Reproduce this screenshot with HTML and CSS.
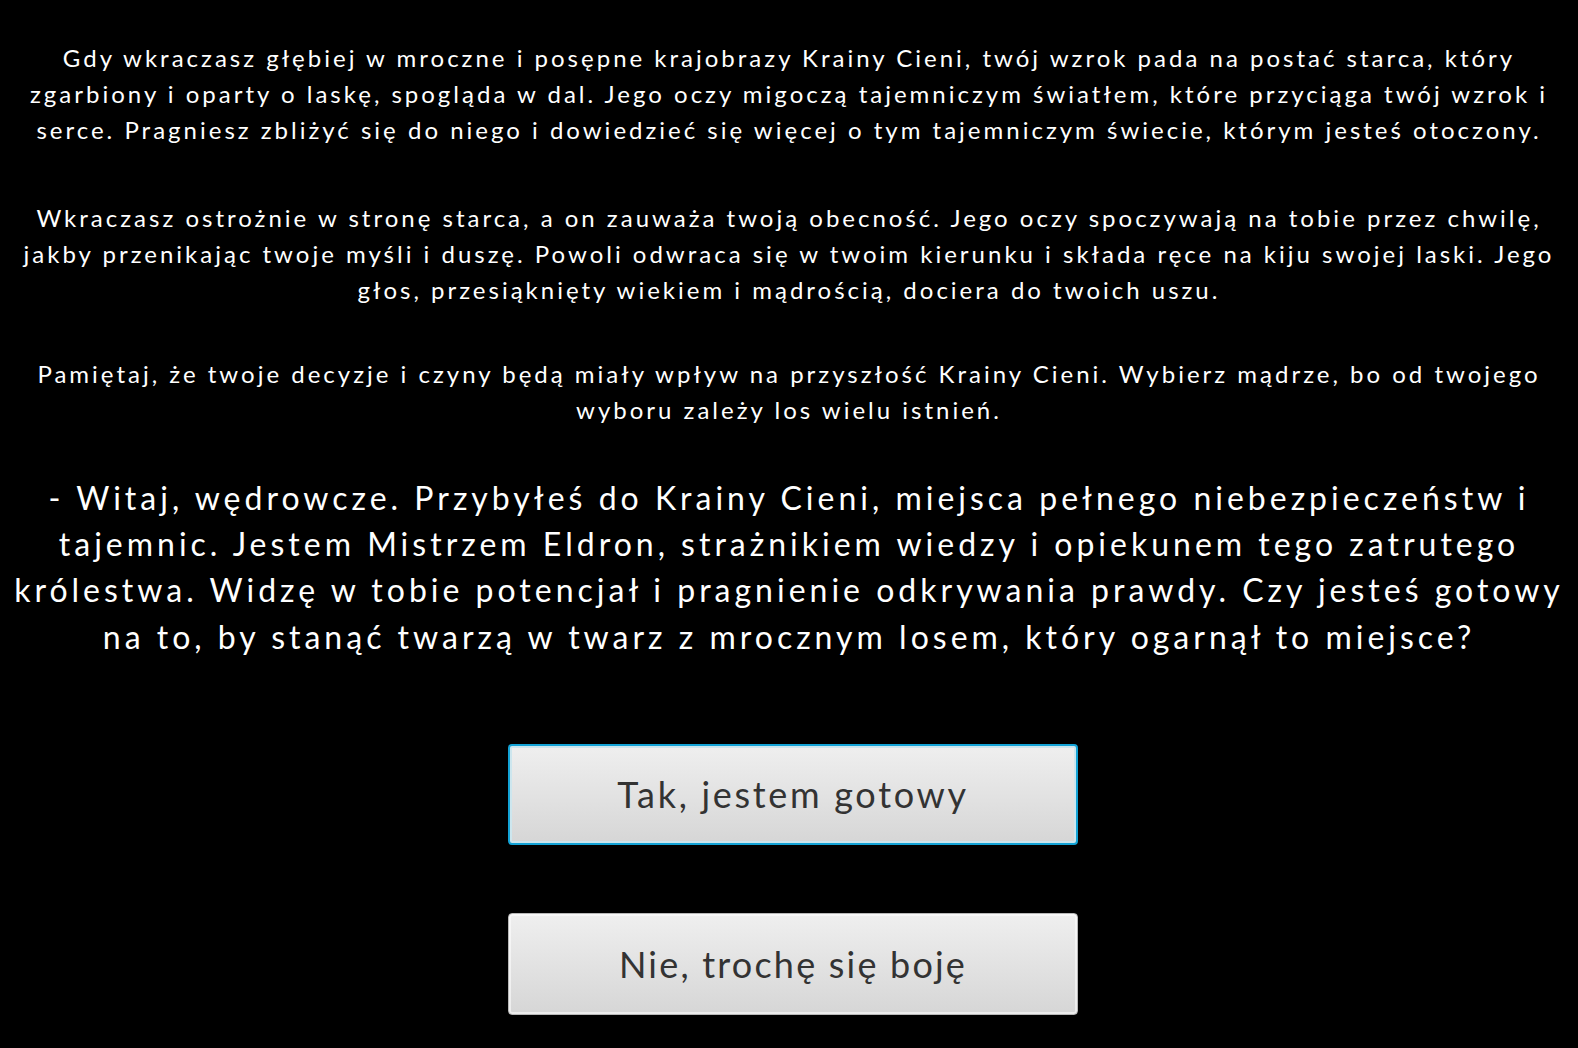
FILE: index.html
```html
<!DOCTYPE html>
<html lang="pl">
<head>
<meta charset="utf-8">
<link rel="stylesheet" href="styles.css">
</head>
<body>
<main class="story">
  <p class="narr narr-first">Gdy wkraczasz głębiej w mroczne i posępne krajobrazy Krainy Cieni, twój wzrok pada na postać starca, który<br>zgarbiony i oparty o laskę, spogląda w dal. Jego oczy migoczą tajemniczym światłem, które przyciąga twój wzrok i<br>serce. Pragniesz zbliżyć się do niego i dowiedzieć się więcej o tym tajemniczym świecie, którym jesteś otoczony.</p>
  <p class="narr">Wkraczasz ostrożnie w stronę starca, a on zauważa twoją obecność. Jego oczy spoczywają na tobie przez chwilę,<br>jakby przenikając twoje myśli i duszę. Powoli odwraca się w twoim kierunku i składa ręce na kiju swojej laski. Jego<br>głos, przesiąknięty wiekiem i mądrością, dociera do twoich uszu.</p>
  <p class="narr">Pamiętaj, że twoje decyzje i czyny będą miały wpływ na przyszłość Krainy Cieni. Wybierz mądrze, bo od twojego<br>wyboru zależy los wielu istnień.</p>
  <p class="speech">- Witaj, wędrowcze. Przybyłeś do Krainy Cieni, miejsca pełnego niebezpieczeństw i<br>tajemnic. Jestem Mistrzem Eldron, strażnikiem wiedzy i opiekunem tego zatrutego<br>królestwa. Widzę w tobie potencjał i pragnienie odkrywania prawdy. Czy jesteś gotowy<br>na to, by stanąć twarzą w twarz z mrocznym losem, który ogarnął to miejsce?</p>
  <div class="choices">
    <button class="choice focused">Tak, jestem gotowy</button>
    <button class="choice second">Nie, trochę się boję</button>
  </div>
</main>
</body>
</html>
```
FILE: styles.css
```css
html, body {
  margin: 0;
  padding: 0;
  background: #000;
}
body {
  font-family: "Lato", "Open Sans", sans-serif;
  color: #fff;
}
.story {
  display: flex;
  flex-direction: column;
  align-items: center;
  padding: 40px 0 0;
  text-align: center;
}
.narr {
  margin: 0 0 48px;
  font-size: 24px;
  line-height: 36px;
  letter-spacing: 3px;
  white-space: nowrap;
}
.narr-first {
  margin-bottom: 52px;
}
.speech {
  margin: -1px 0 0;
  font-size: 32px;
  line-height: 46.2px;
  letter-spacing: 4px;
  white-space: nowrap;
}
.choices {
  display: flex;
  flex-direction: column;
  gap: 68px;
  margin-top: 84px;
  padding-left: 8px;
}
.choice {
  width: 570px;
  height: 101px;
  border: 1px solid #b8b8b8;
  border-radius: 4px;
  background: linear-gradient(#efefef, #d6d6d6);
  box-shadow: inset 0 0 0 2px rgba(255,255,255,0.55);
  font-family: inherit;
  font-size: 36px;
  letter-spacing: 2.7px;
  color: #333;
}
.choice.second {
  height: 102px;
  letter-spacing: 2.2px;
}
.choice.focused {
  border: 2px solid #13a3d6;
  box-shadow: inset 0 0 0 2px #cde6ee;
}
```
